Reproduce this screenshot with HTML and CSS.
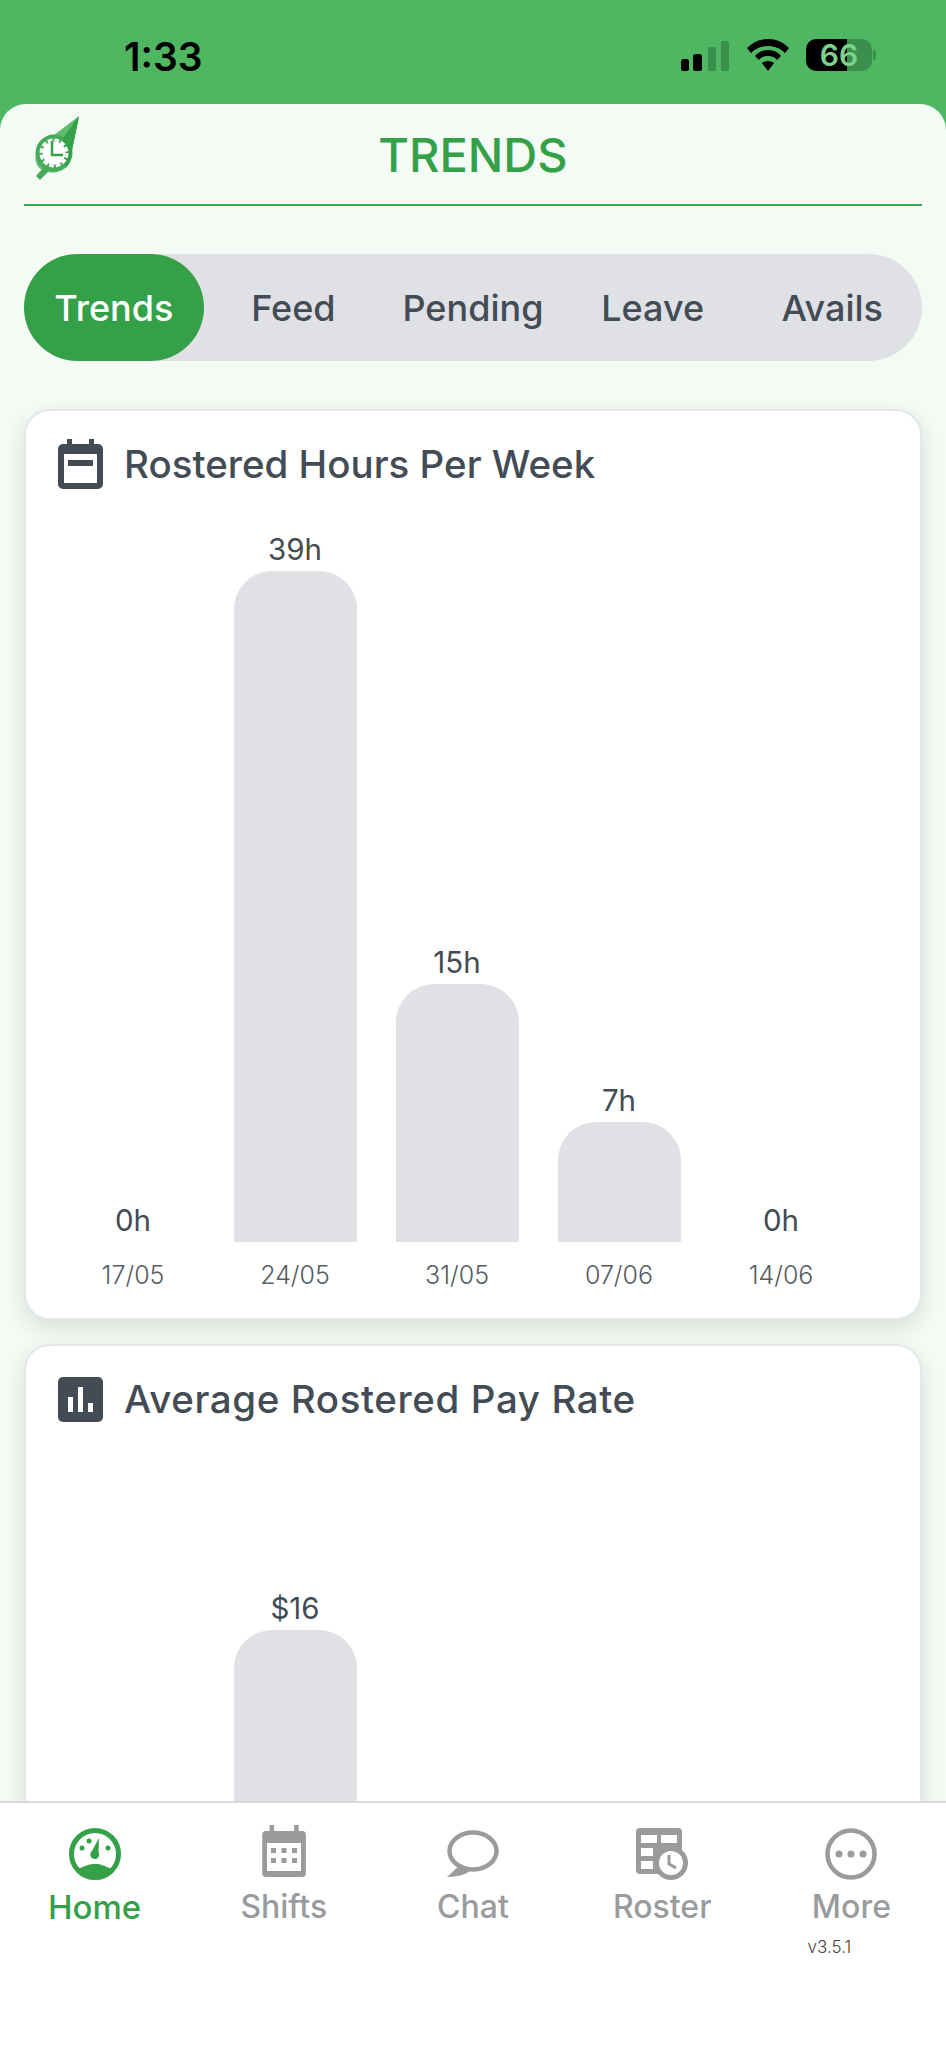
FILE: index.html
```html
<!DOCTYPE html>
<html lang="en">
<head>
    <meta charset="UTF-8">
    <meta name="viewport" content="width=device-width, initial-scale=1.0">
    <title>Trends</title>
    <link rel="stylesheet" href="styles.css">
</head>
<body>
    <div class="statusbar">
        <span class="clock">1:33</span>
        <div class="status-icons">
            <svg class="signal" width="48" height="30" viewBox="0 0 48 30">
                <rect x="0" y="18" width="8" height="12" rx="2.5" fill="#000"/>
                <rect x="12" y="13" width="9" height="17" rx="2.5" fill="#000"/>
                <rect x="27" y="6" width="8" height="24" rx="2.5" fill="#3b8f4c"/>
                <rect x="40" y="0" width="8" height="30" rx="2.5" fill="#3b8f4c"/>
            </svg>
            <svg class="wifi" width="42" height="32" viewBox="0 0 42 32">
                <path d="M21 0C13 0 6 3 0 9l4 5c5-5 11-7 17-7s12 2 17 7l4-5C36 3 29 0 21 0z" fill="#000"/>
                <path d="M21 11c-5 0-10 2-13 6l4 4c2-3 5-4 9-4s7 1 9 4l4-4c-3-4-8-6-13-6z" fill="#000"/>
                <path d="M21 22c-3 0-5 1-6 2l6 8 6-8c-1-1-3-2-6-2z" fill="#000"/>
            </svg>
            <div class="battery"><span>66</span></div>
            <div class="battery-nub"></div>
        </div>
    </div>

    <div class="sheet">
        <header class="topbar">
            <svg class="logo" width="48" height="66" viewBox="0 0 48 66">
                <path d="M46 2L12 28C4 34 1 42 3 48C5 56 14 60 24 58C33 56 37 50 38 42C40 30 44 14 46 2z" fill="#5fbc6f"/>
                <circle cx="21" cy="39" r="18.5" fill="#45ab58"/>
                <path d="M46 2L30 24L33 54C36 51 37 47 38 42C40 30 44 14 46 2z" fill="#34a047"/>
                <path d="M11 53L3 62L7 66L16 57z" fill="#45ab58"/>
                <circle cx="21" cy="39" r="11.5" fill="#fff"/>
                <circle cx="21" cy="39" r="13" fill="none" stroke="#fff" stroke-width="3" stroke-dasharray="4.8 2"/>
                <path d="M19 27v14h11" fill="none" stroke="#34a047" stroke-width="2.5"/>
            </svg>
            <h1>TRENDS</h1>
        </header>

        <nav class="tabs">
            <a class="tab active">Trends</a>
            <a class="tab">Feed</a>
            <a class="tab">Pending</a>
            <a class="tab">Leave</a>
            <a class="tab">Avails</a>
        </nav>

        <section class="card">
            <div class="card-title">
                <svg width="45" height="50" viewBox="0 0 45 50">
                    <path d="M9 0h5v5h17V0h5v5h4a5 5 0 0 1 5 5v35a5 5 0 0 1-5 5H5a5 5 0 0 1-5-5V10a5 5 0 0 1 5-5h4z" fill="#434c55"/>
                    <rect x="6" y="15" width="33" height="29" fill="#fff"/>
                    <rect x="10" y="21" width="25" height="6" fill="#434c55"/>
                </svg>
                <h2>Rostered Hours Per Week</h2>
            </div>
            <div class="chart">
                <div class="col"><span class="value">0h</span></div>
                <div class="col"><span class="value">39h</span><div class="bar" style="height: 671px"></div></div>
                <div class="col"><span class="value">15h</span><div class="bar" style="height: 258px"></div></div>
                <div class="col"><span class="value">7h</span><div class="bar" style="height: 120px"></div></div>
                <div class="col"><span class="value">0h</span></div>
            </div>
            <div class="dates">
                <span>17/05</span>
                <span>24/05</span>
                <span>31/05</span>
                <span>07/06</span>
                <span>14/06</span>
            </div>
        </section>

        <section class="card">
            <div class="card-title">
                <svg width="45" height="45" viewBox="0 0 45 45">
                    <rect width="45" height="45" rx="5" fill="#434c55"/>
                    <rect x="10" y="20" width="5" height="15" fill="#fff"/>
                    <rect x="20" y="10" width="5" height="25" fill="#fff"/>
                    <rect x="30" y="26" width="5" height="9" fill="#fff"/>
                </svg>
                <h2 class="wide">Average Rostered Pay Rate</h2>
            </div>
            <div class="chart">
                <div class="col"></div>
                <div class="col"><span class="value">$16</span><div class="bar" style="height: 547px"></div></div>
                <div class="col"></div>
                <div class="col"></div>
                <div class="col"></div>
            </div>
        </section>
    </div>

    <footer class="tabbar">
        <a class="tabbar-item current">
            <svg width="52" height="52" viewBox="0 0 52 52">
                <circle cx="26" cy="26" r="23.5" fill="none" stroke="#34a047" stroke-width="5"/>
                <path d="M9 41C16 38 20 36 26 36s10 2 17 5C38 50 14 50 9 41z" fill="#34a047"/>
                <path d="M30 10l-.5 14a4.5 4.5 0 1 1-6.500-1z" fill="#34a047"/>
                <circle cx="13" cy="20" r="2.5" fill="#34a047"/>
                <circle cx="20" cy="13" r="2.5" fill="#34a047"/>
                <circle cx="39" cy="20" r="2.5" fill="#34a047"/>
            </svg>
            <span>Home</span>
        </a>
        <a class="tabbar-item">
            <svg width="52" height="52" viewBox="0 0 52 52">
                <path d="M10 -3h5v6h22v-6h5v6h4a4 4 0 0 1 4 4v38a4 4 0 0 1-4 4H6a4 4 0 0 1-4-4V7a4 4 0 0 1 4-4h4z" fill="#999b9c" transform="translate(2.400 0) scale(0.910 1)"/>
                <rect x="9" y="15" width="34" height="28" fill="#fff"/>
                <g fill="#999b9c">
                    <rect x="13" y="20" width="5" height="5"/><rect x="23.5" y="20" width="5" height="5"/><rect x="34" y="20" width="5" height="5"/>
                    <rect x="13" y="30" width="5" height="5"/><rect x="23.5" y="30" width="5" height="5"/><rect x="34" y="30" width="5" height="5"/>
                </g>
            </svg>
            <span>Shifts</span>
        </a>
        <a class="tabbar-item">
            <svg width="52" height="52" viewBox="0 0 52 52">
                <ellipse cx="26" cy="23" rx="23.5" ry="18.5" fill="none" stroke="#999b9c" stroke-width="4.5"/>
                <path d="M14 36L0 49c6 0 18-1 24-7z" fill="#999b9c"/>
            </svg>
            <span>Chat</span>
        </a>
        <a class="tabbar-item">
            <svg width="52" height="52" viewBox="0 0 52 52">
                <rect x="0" y="0" width="46" height="46" rx="4" fill="#999b9c"/>
                <g fill="#fff">
                    <rect x="5" y="7" width="16" height="8"/><rect x="25" y="7" width="16" height="8"/>
                    <rect x="5" y="20" width="12" height="8"/><rect x="5" y="33" width="12" height="8"/>
                </g>
                <circle cx="35" cy="35" r="17" fill="#999b9c"/>
                <circle cx="35" cy="35" r="12" fill="#fff"/>
                <path d="M33 27v9l7 4" fill="none" stroke="#999b9c" stroke-width="3"/>
            </svg>
            <span>Roster</span>
        </a>
        <a class="tabbar-item">
            <svg width="52" height="52" viewBox="0 0 52 52">
                <circle cx="26" cy="26" r="23.5" fill="none" stroke="#999b9c" stroke-width="4.5"/>
                <circle cx="14" cy="26" r="3.5" fill="#999b9c"/>
                <circle cx="26" cy="26" r="3.5" fill="#999b9c"/>
                <circle cx="38" cy="26" r="3.5" fill="#999b9c"/>
            </svg>
            <span>More</span>
            <small class="version">v3.5.1</small>
        </a>
    </footer>
</body>
</html>
```

FILE: styles.css
```css
* {
    box-sizing: border-box;
}
body {
    margin: 0;
    height: 2048px;
    overflow: hidden;
    display: flex;
    flex-direction: column;
    background-color: #4fb662;
    font-family: Inter, "Open Sans", sans-serif;
    color: #434c55;
}

/* status bar */
.statusbar {
    height: 104px;
    flex: none;
    display: flex;
    justify-content: space-between;
    align-items: flex-start;
    padding: 39px 70px 0 124px;
}
.clock {
    font-size: 39px;
    line-height: 36px;
    font-weight: 600;
    color: #000;
}
.status-icons {
    display: flex;
    align-items: flex-end;
    height: 32px;
}
.signal {
    margin-right: 18px;
}
.wifi {
    margin-right: 17px;
}
.battery {
    width: 66px;
    height: 32px;
    border-radius: 10px;
    background: linear-gradient(to right, #000 62%, #3b8f4c 62%);
    color: #7ed08c;
    font-size: 30px;
    font-weight: 600;
    line-height: 32px;
    text-align: center;
}
.battery-nub {
    width: 3px;
    height: 10px;
    margin: 0 0 11px 1px;
    border-radius: 0 3px 3px 0;
    background-color: #3b8f4c;
}

/* main sheet */
.sheet {
    flex: 1;
    min-height: 0;
    overflow: hidden;
    background-color: #f4faf4;
    border-radius: 26px 26px 0 0;
    padding: 0 24px;
}
.topbar {
    height: 102px;
    display: grid;
    grid-template-columns: 1fr auto 1fr;
    align-items: center;
    border-bottom: 2px solid #3fa752;
}
.logo {
    margin: 0 0 14px 9px;
}
.topbar h1 {
    margin: 0;
    font-size: 47px;
    font-weight: 500;
    color: #34a047;
}

/* tabs */
.tabs {
    margin-top: 48px;
    display: grid;
    grid-template-columns: repeat(5, 1fr);
    height: 107px;
    border-radius: 54px;
    background-color: #dfe1e5;
}
.tab {
    display: flex;
    align-items: center;
    justify-content: center;
    border-radius: 54px;
    font-size: 36px;
    font-weight: 450;
}
.tab.active {
    background-color: #34a047;
    color: #fff;
}

/* cards */
.card {
    margin: 48px 0 0;
    padding: 27px 0 28px;
    background-color: #fff;
    border: 2px solid #e4e8e8;
    border-radius: 26px;
    box-shadow: 0 8px 20px rgba(50, 70, 60, 0.14);
}
.card + .card {
    margin-top: 24px;
}
.card-title {
    display: flex;
    align-items: center;
    gap: 21px;
    height: 52px;
    padding-left: 32px;
}
.card-title h2 {
    margin: 0;
    font-size: 38.5px;
    font-weight: 450;
    line-height: 45px;
}
.card-title h2.wide {
    letter-spacing: 0.6px;
}
.chart,
.dates {
    display: grid;
    grid-template-columns: repeat(5, 162px);
    padding-left: 26px;
}
.chart {
    height: 752px;
}
.col {
    display: flex;
    flex-direction: column;
    justify-content: flex-end;
    align-items: center;
}
.value {
    font-size: 29.5px;
    line-height: 34px;
    margin-bottom: 5px;
}
.bar {
    width: 123px;
    background-color: #dfe1e5;
    border-radius: 38px 38px 0 0;
}
.dates {
    margin-top: 18px;
    font-size: 25px;
    line-height: 30px;
    font-weight: 300;
    color: #555c63;
    text-align: center;
}

/* bottom navigation */
.tabbar {
    flex: none;
    height: 247px;
    display: grid;
    grid-template-columns: repeat(5, 1fr);
    padding-top: 25px;
    background-color: #fff;
    border-top: 2px solid #d5dadd;
}
.tabbar-item {
    display: flex;
    flex-direction: column;
    align-items: center;
    font-size: 32px;
    font-weight: 500;
    color: #999b9c;
}
.tabbar-item svg {
    overflow: visible;
}
.tabbar-item span {
    margin-top: 7px;
    line-height: 40px;
}
.tabbar-item.current {
    font-size: 33px;
    color: #34a047;
}
.version {
    margin: 8px 44px 0 0;
    font-size: 17px;
    line-height: 24px;
    font-weight: 300;
    color: #444;
}
```
